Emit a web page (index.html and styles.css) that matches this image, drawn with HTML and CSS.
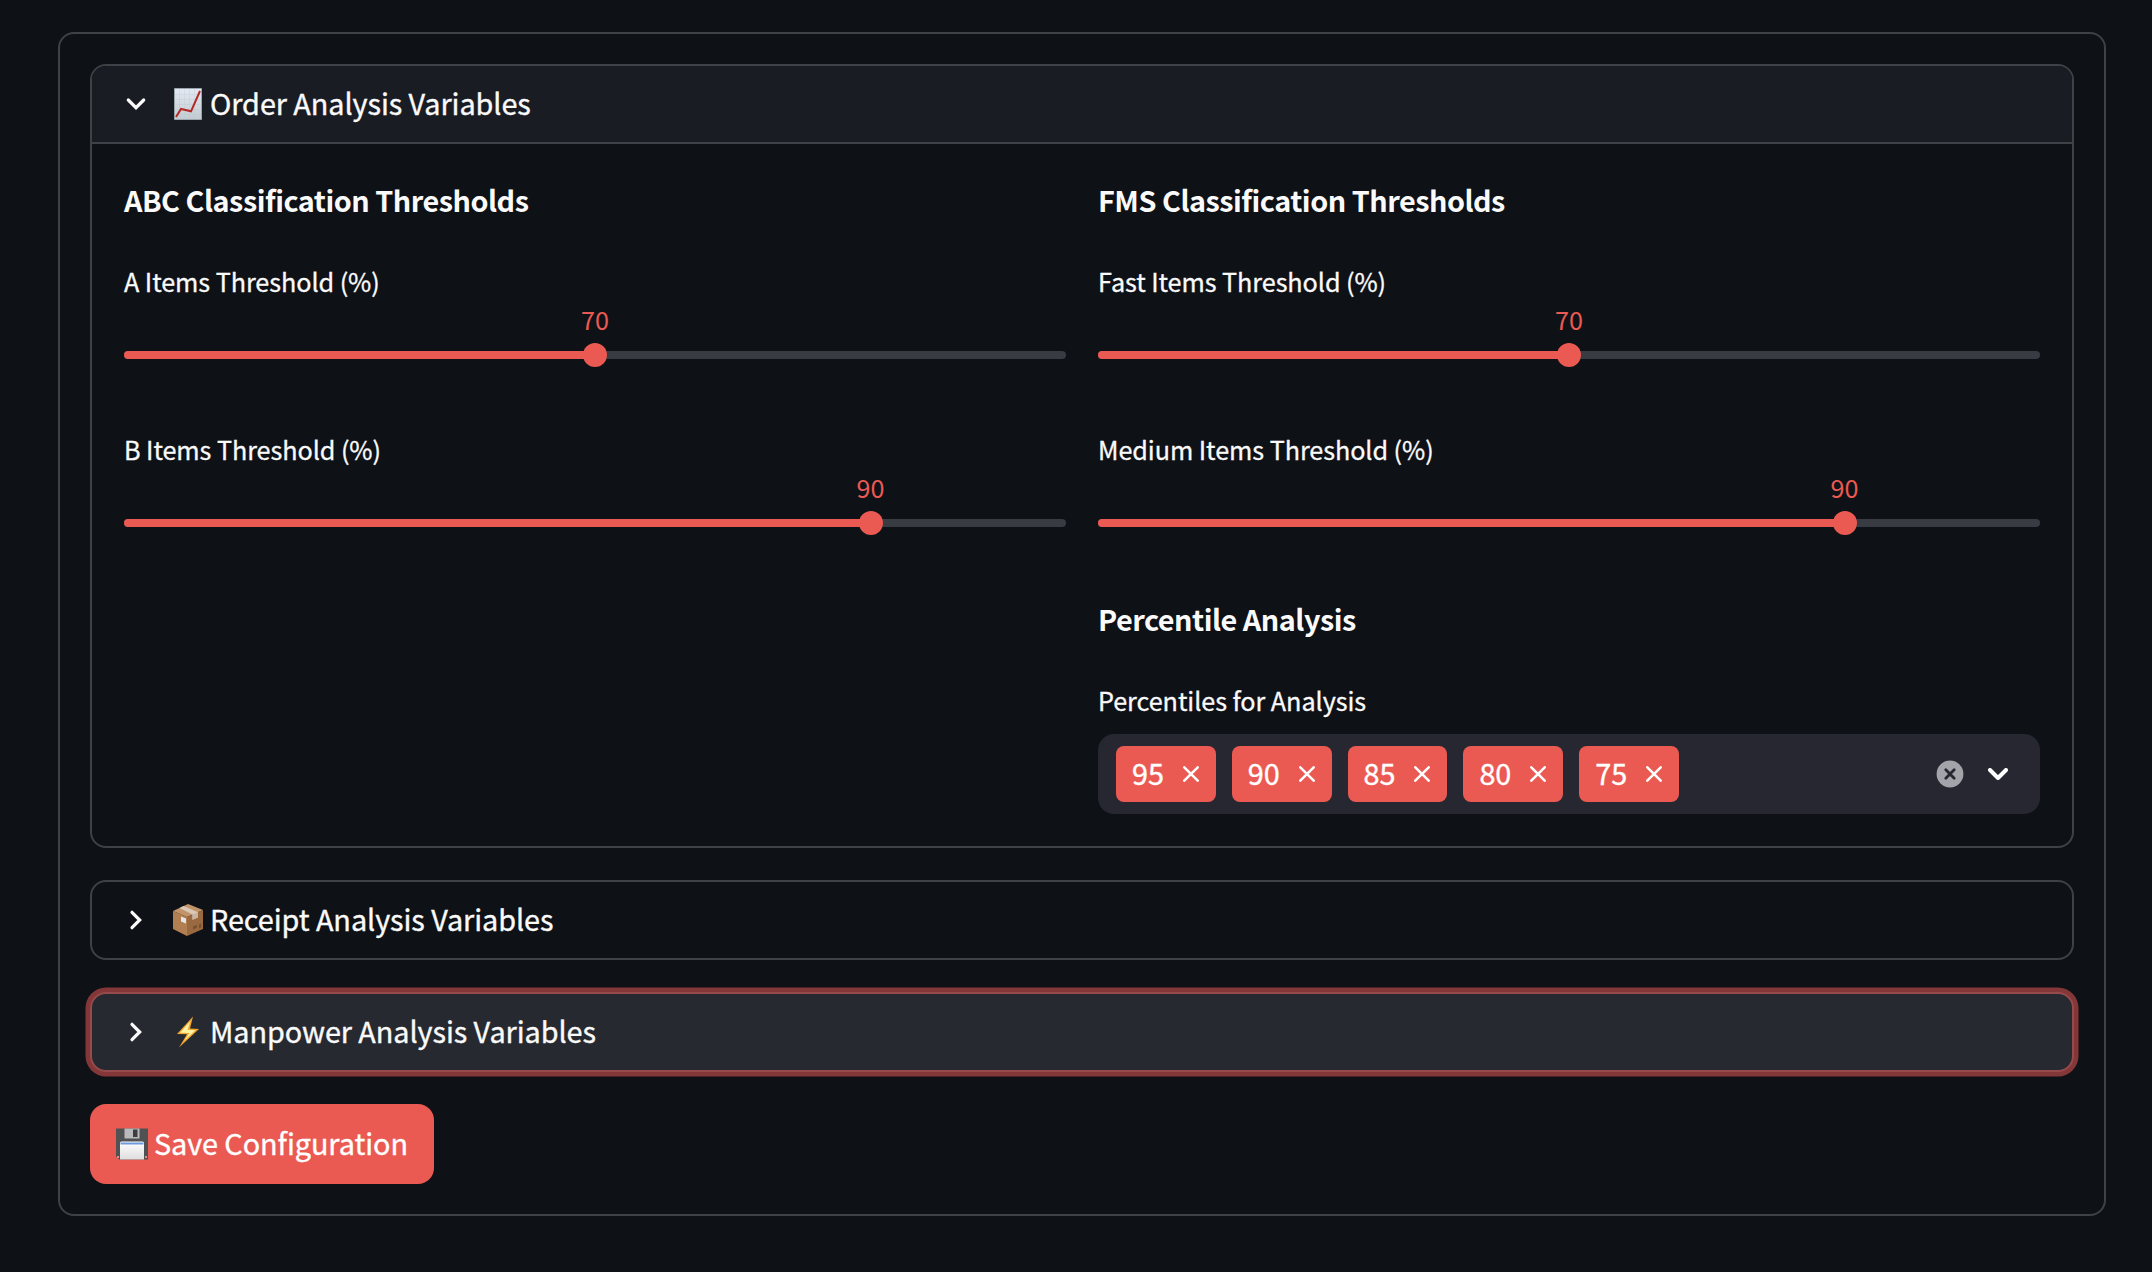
FILE: index.html
```
<!DOCTYPE html>
<html lang="en">
<head>
<meta charset="utf-8">
<title>Configuration</title>
<link rel="stylesheet" href="styles.css">
</head>
<body>
<svg class="defs" width="0" height="0" aria-hidden="true">
  <defs>
    <symbol id="cross" viewBox="0 0 16 16"><path d="M1.300 1.300 14.700 14.700M14.700 1.300 1.300 14.700" fill="none" stroke="currentColor" stroke-width="2.500" stroke-linecap="round"/></symbol>
    <symbol id="chevron" viewBox="0 0 20 20"><path d="M2.3 6 10 13.7 17.7 6" fill="none" stroke="currentColor" stroke-width="3.200" stroke-linecap="round" stroke-linejoin="miter"/></symbol>
  </defs>
</svg>
<form class="form">
  <section class="expander">
    <header class="summary summary-open">
      <svg class="chevron"><use href="#chevron"/></svg>
      <svg class="emoji" viewBox="0 0 32 32">
        <defs><linearGradient id="paper" x2="0" y2="1"><stop stop-color="#e3e9f0"/><stop offset="1" stop-color="#c3cbd1"/></linearGradient></defs>
        <path d="M2.5.5h27v31h-27z" fill="url(#paper)" stroke="#9ba4ad"/>
        <path d="M7.5 1v30M12.5 1v30M17.5 1v30M22.5 1v30M3 6.5h26M3 11.500h26M3 16.500h26M3 21.500h26M3 26.500h26" stroke="#b9c6d2" stroke-width=".5" opacity=".6"/>
        <path d="M4 29 9 21l10 2.300L28 3" fill="none" stroke="#b52a25" stroke-width="2"/>
      </svg>
      <span class="title">Order Analysis Variables</span>
    </header>
    <div class="columns">
      <div class="column">
        <h3 class="heading">ABC Classification Thresholds</h3>
        <div class="slider">
          <label class="label">A Items Threshold (%)</label>
          <div class="track"><div class="fill" style="width:50%"><span class="value">70</span><span class="thumb"></span></div></div>
        </div>
        <div class="slider">
          <label class="label">B Items Threshold (%)</label>
          <div class="track"><div class="fill" style="width:79.25%"><span class="value">90</span><span class="thumb"></span></div></div>
        </div>
      </div>
      <div class="column">
        <h3 class="heading">FMS Classification Thresholds</h3>
        <div class="slider">
          <label class="label">Fast Items Threshold (%)</label>
          <div class="track"><div class="fill" style="width:50%"><span class="value">70</span><span class="thumb"></span></div></div>
        </div>
        <div class="slider">
          <label class="label">Medium Items Threshold (%)</label>
          <div class="track"><div class="fill" style="width:79.25%"><span class="value">90</span><span class="thumb"></span></div></div>
        </div>
        <h3 class="heading heading-next">Percentile Analysis</h3>
        <label class="label">Percentiles for Analysis</label>
        <div class="select">
          <span class="tag"><span class="tag-text">95</span><svg class="cross"><use href="#cross"/></svg></span>
          <span class="tag"><span class="tag-text">90</span><svg class="cross"><use href="#cross"/></svg></span>
          <span class="tag"><span class="tag-text">85</span><svg class="cross"><use href="#cross"/></svg></span>
          <span class="tag"><span class="tag-text">80</span><svg class="cross"><use href="#cross"/></svg></span>
          <span class="tag"><span class="tag-text">75</span><svg class="cross"><use href="#cross"/></svg></span>
          <svg class="clear" viewBox="0 0 28 28"><circle cx="14" cy="14" r="13.4" fill="#a3a4a9"/><path d="M9.800 9.800 18.200 18.200M18.200 9.800 9.800 18.200" stroke="#262730" stroke-width="2.800" stroke-linecap="round"/></svg>
          <svg class="drop" viewBox="0 0 20 12"><path d="M2 2 10 10 18 2" fill="none" stroke="#fff" stroke-width="4" stroke-linecap="round" stroke-linejoin="round"/></svg>
        </div>
      </div>
    </div>
  </section>
  <section class="expander">
    <header class="summary">
      <svg class="chevron chevron-right"><use href="#chevron"/></svg>
      <svg class="emoji" viewBox="0 0 32 32">
        <path d="M1 7 15 13v19L1 25z" fill="#b17f51"/>
        <path d="M15 13 31 6v19L15 32z" fill="#9a693f"/>
        <path d="M1 7 16 0 31 6 15 13z" fill="#c3946a"/>
        <path d="M7.500 4 11.500 2.100 26 8.200v5.400l-5.500 2.200V10.500z" fill="#d9c8b5"/>
        <path d="M20.500 10.500 26 8.200v5.400l-5.500 2.200z" fill="#c8b4a0"/>
        <path d="M9 12.500 14 14.500v5L9 17.500z" fill="#e4e5e6"/>
        <path d="M21 22.500 25 21v2.500l-4 2zM27 20.500l2-1v4l-2 1z" fill="#77502f"/>
      </svg>
      <span class="title">Receipt Analysis Variables</span>
    </header>
  </section>
  <section class="expander expander-focus">
    <header class="summary">
      <svg class="chevron chevron-right"><use href="#chevron"/></svg>
      <svg class="emoji" viewBox="0 0 32 32">
        <path d="M21 .5 5 18l10 .3L7 31.500 27 13l-9-.5z" fill="#f3a52c"/>
        <path d="M18.500 5 8 16.700l9.500.3-5.500 8L23.500 14.200l-8-.5z" fill="#fff3a0"/>
      </svg>
      <span class="title">Manpower Analysis Variables</span>
    </header>
  </section>
  <button type="button" class="save">
    <svg class="emoji" viewBox="0 0 32 32">
      <defs><linearGradient id="disk" x2="0" y2="1"><stop stop-color="#fff"/><stop offset="1" stop-color="#dedede"/></linearGradient></defs>
      <path d="M0 .5h32v31H3L0 28.500z" fill="#505153"/>
      <path d="M8.500.5h15v10h-15z" fill="#b9babb"/>
      <path d="M17 1.500h4.500v7.500H17z" fill="#3c3d3e"/>
      <path d="M4 31.500V15q0-1.500 1.500-1.500h21Q28 13.500 28 15v16.500z" fill="url(#disk)"/>
      <path d="M4.500 14.500h23v2h-23z" fill="#6c9bdc"/>
      <path d="M1 28h2v2H1zM29 28h2v2h-2z" fill="#e98782"/>
    </svg>
    <span class="title">Save Configuration</span>
  </button>
</form>
</body>
</html>
```
FILE: styles.css
```
* { box-sizing: border-box; }
body {
  margin: 0;
  padding: 32px 46px 56px 58px;
  background: #0e1116;
  color: #fafafa;
  font-family: "Noto Sans CJK JP", "Noto Sans", sans-serif;
}
.defs { position: absolute; }
.form {
  display: flex;
  flex-direction: column;
  align-items: stretch;
  gap: 32px;
  height: 1184px;
  padding: 30px;
  border: 2px solid #3f4146;
  border-radius: 16px;
}
.expander {
  border: 2px solid #3f4146;
  border-radius: 16px;
}
.expander-focus {
  background: #262930;
  border-color: #964a4c;
  box-shadow: 0 0 0 4.5px #833739;
}
.summary {
  display: flex;
  align-items: center;
  height: 76px;
  padding-left: 34px;
}
.summary-open {
  height: 78px;
  background: #1a1c24;
  border-bottom: 2px solid #3f4146;
  border-radius: 14px 14px 0 0;
}
.chevron {
  width: 20px;
  height: 20px;
  margin-right: 26px;
}
.chevron-right { transform: rotate(-90deg); }
.emoji {
  width: 32px;
  height: 32px;
  margin-right: 6px;
  flex: none;
}
.title {
  padding-bottom: 2px;
  font-size: 28.8px;
  line-height: 44px;
  letter-spacing: -0.06px;
  white-space: nowrap;
  -webkit-text-stroke: 0.35px currentColor;
}
.columns {
  display: grid;
  grid-template-columns: 1fr 1fr;
  gap: 32px;
  padding: 32px;
}
.heading {
  margin: 0 0 32px;
  height: 50px;
  font-size: 28.8px;
  line-height: 48px;
  font-weight: 700;
  letter-spacing: -0.48px;
}
.heading-next { margin-top: 1px; }
.label {
  display: block;
  height: 48px;
  font-size: 25.2px;
  line-height: 46px;
  letter-spacing: -0.06px;
  -webkit-text-stroke: 0.3px currentColor;
}
.slider { height: 168px; }
.track {
  height: 8px;
  margin-top: 45px;
  background: #383b42;
  border-radius: 4px;
}
.fill {
  position: relative;
  height: 8px;
  background: #eb5a52;
  border-radius: 4px 0 0 4px;
}
.thumb {
  position: absolute;
  right: -12px;
  top: -8px;
  width: 24px;
  height: 24px;
  border-radius: 50%;
  background: #eb5a52;
}
.value {
  position: absolute;
  right: -30px;
  top: -50px;
  width: 60px;
  text-align: center;
  color: #eb5a52;
  font-size: 25.2px;
  line-height: 36px;
}
.select {
  display: flex;
  align-items: center;
  gap: 16px;
  height: 80px;
  margin-top: 9px;
  padding: 0 32px 0 18px;
  background: #262730;
  border-radius: 16px;
}
.tag {
  display: flex;
  align-items: center;
  justify-content: space-between;
  width: 99.8px;
  height: 56px;
  padding: 0 17px 0 16px;
  background: #eb5a52;
  border-radius: 8px;
  color: #fff;
  font-size: 28.8px;
  line-height: 54px;
}
.tag-text {
  height: 56px;
  -webkit-text-stroke: 0.35px currentColor;
}
.cross { width: 16px; height: 16px; }
.clear { width: 28px; height: 28px; margin-left: auto; }
.drop { width: 20px; height: 12px; margin-left: 8px; }
.save {
  display: flex;
  align-items: center;
  align-self: flex-start;
  width: 344px;
  height: 80px;
  padding: 0 0 0 26px;
  border: 0;
  border-radius: 16px;
  background: #eb5a52;
  color: #fff;
  font-family: inherit;
}
```
